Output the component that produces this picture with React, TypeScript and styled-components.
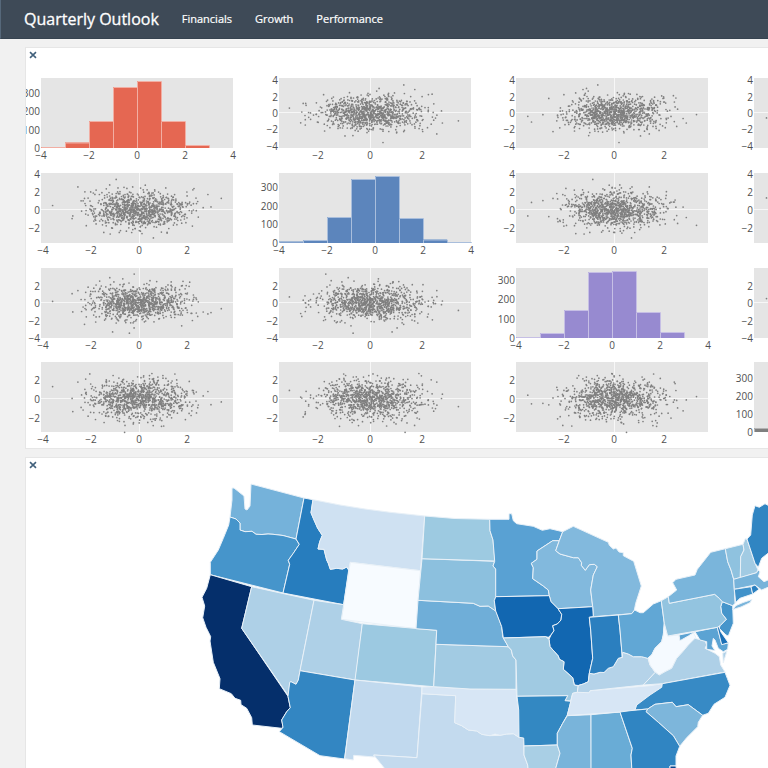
import React from "react";
import styled, { createGlobalStyle } from "styled-components";

const GlobalStyle = createGlobalStyle`
  *, *::before, *::after { box-sizing: border-box; }
  body {
    margin: 0;
    background: #f1f1f1;
    font-family: "Open Sans", sans-serif;
    overflow: hidden;
  }
`;

const Page = styled.div`
  display: flex;
  flex-direction: column;
  height: 100vh;
  overflow: hidden;
`;

const Header = styled.header`
  display: flex;
  flex: none;
  align-items: center;
  gap: 23px;
  height: 39px;
  padding-left: 23px;
  background: #3e4a57;
  border-left: 1px solid #56687a;
  border-bottom: 1px solid #364350;
`;

const Title = styled.h1`
  margin: 0;
  color: #fff;
  font-size: 16px;
  font-weight: 400;
  line-height: 24px;
  -webkit-text-stroke: 0.3px #fff;
`;

const Nav = styled.nav`
  display: flex;
  gap: 23px;
`;

const NavLink = styled.a`
  color: #fff;
  font-size: 11px;
  line-height: 24px;
  text-decoration: none;
  -webkit-text-stroke: 0.2px #fff;
`;

const Dashboard = styled.main`
  display: flex;
  flex: 1;
  flex-direction: column;
  gap: 8px;
  min-height: 0;
  padding: 8px 0 0 25px;
`;

const Panel = styled.section<{ $fill?: boolean }>`
  flex: ${(p) => (p.$fill ? "1 1 0" : "none")};
  min-height: 0;
  overflow: hidden;
  background: #fff;
  border: 1px solid #e6e6e6;
  border-right: 0;
  border-bottom-width: ${(p) => (p.$fill ? "0" : "1px")};
`;

const PanelBar = styled.div`
  display: flex;
  height: 16px;
  padding: 2px;
`;

const CloseButton = styled.button`
  display: flex;
  align-items: center;
  justify-content: center;
  width: 10px;
  height: 10px;
  padding: 0;
  background: none;
  border: 0;
  cursor: pointer;
`;

const Matrix = styled.div`
  display: grid;
  grid-template-columns: repeat(4, 1fr);
  grid-template-rows: repeat(4, 1fr);
  width: 950px;
  height: 379px;
  margin: 14px 0 -9px 15px;
`;

const Plot = styled.svg`
  display: block;
  width: 192px;
  height: 70px;
  overflow: visible;
`;

const Tick = styled.text`
  fill: #505050;
  font-family: "Open Sans", sans-serif;
  font-size: 10px;
`;

const MapDrawing = styled.svg`
  display: block;
  width: 900px;
  height: 480px;
`;

const State = styled.path`
  stroke: #e9f1f8;
  stroke-width: 1;
  stroke-linejoin: round;
`;

const W = 192;
const H = 70;

/* ---------- sample data ---------- */

function makeRandom(seed: number) {
  let s = seed;
  return () => {
    s = (s * 1664525 + 1013904223) % 4294967296;
    return s / 4294967296;
  };
}

function makeSamples(count: number): number[][] {
  const rand = makeRandom(2718);
  const normal = () => {
    let v = 9;
    while (Math.abs(v) > 2.9) {
      v = Math.sqrt(-2 * Math.log(rand() + 1e-9)) * Math.cos(2 * Math.PI * rand());
    }
    return v;
  };
  const rows = [
    [-3.6, 0.5, 0.2, 1.3],
    [3.43, 1.3, -0.65, -0.3],
    [0.6, -3.1, 0.7, 0.9],
    [-0.95, 3.4, -0.85, -0.8],
    [-0.2, -1.7, 3.3, 0.25],
    [-0.4, -0.65, -3.45, 0.4],
    [-1.1, 0.85, -3.3, -0.5],
    [-0.6, 1.35, 0.5, -3.5],
    [3, 0.35, -1.1, -0.6],
  ];
  while (rows.length < count) rows.push([normal(), normal(), normal(), normal()]);
  return rows;
}

const samples = makeSamples(1000);

type Axis = { zero: number; unit: number; ticks: number[] };

const xAxes: Axis[] = [
  { zero: 98, unit: 24, ticks: [-4, -2, 0, 2] },
  { zero: 91, unit: 26, ticks: [-2, 0, 2] },
  { zero: 98, unit: 25, ticks: [-2, 0, 2] },
  { zero: 100, unit: 25, ticks: [-2, 0, 2] },
];

const yAxes: Axis[] = [
  { zero: 35, unit: 8.2, ticks: [4, 2, 0, -2, -4] },
  { zero: 37, unit: 9, ticks: [4, 2, 0, -2] },
  { zero: 35, unit: 8.75, ticks: [2, 0, -2, -4] },
  { zero: 37, unit: 9.5, ticks: [2, 0, -2] },
];

const histograms = [
  { color: "#e56752", edge: "#f2aea3", step: 18.5, xTicks: [-4, -2, 0, 2, 4], bars: [1, 5.5, 27, 61, 67, 27, 3] },
  { color: "#5c85bc", edge: "#a9bedc", step: 18.7, xTicks: [-4, -2, 0, 2, 4], bars: [1.5, 3, 26, 64, 67, 25, 3.5, 1] },
  { color: "#978ad0", edge: "#c6bfe5", step: 19.4, xTicks: [-4, -2, 0, 2, 4], bars: [1, 5, 28, 66, 67, 26, 6] },
  { color: "#7f7f7f", edge: "#b4b4b4", step: 18, xTicks: [-2, 0, 2], bars: [4, 5, 27, 61, 66, 26, 3] },
];

const label = (v: number) => (v < 0 ? `−${-v}` : `${v}`);

function XTicks({ at }: { at: [number, number][] }) {
  return (
    <>
      {at.map(([v, x]) => (
        <Tick key={v} x={x} y={81} textAnchor="middle">
          {label(v)}
        </Tick>
      ))}
    </>
  );
}

function YTicks({ at }: { at: [number, number][] }) {
  return (
    <>
      {at.map(([v, y]) => (
        <Tick key={v} x={-1} y={y + 4} textAnchor="end">
          {label(v)}
        </Tick>
      ))}
    </>
  );
}

function Scatter({ row, col }: { row: number; col: number }) {
  const ax = xAxes[col];
  const ay = yAxes[row];
  return (
    <Plot viewBox={`0 0 ${W} ${H}`} role="img" aria-label={`Scatter ${row + 1}, ${col + 1}`}>
      <rect width={W} height={H} fill="#e5e5e5" />
      <path d={`M0 ${ay.zero - 0.5}H${W}M${ax.zero + 0.5} 0V${H}`} stroke="#f7f7f7" />
      <g fill="#7f7f7f">
        {samples.map((s, i) => {
          const x = ax.zero + s[col] * ax.unit;
          const y = ay.zero - s[row] * ay.unit;
          if (x < 1 || x > W - 1) return null;
          return <circle key={i} cx={x.toFixed(1)} cy={y.toFixed(1)} r="0.85" />;
        })}
      </g>
      <XTicks at={ax.ticks.map((v) => [v, ax.zero + v * ax.unit])} />
      <YTicks at={ay.ticks.map((v) => [v, ay.zero - v * ay.unit])} />
    </Plot>
  );
}

function Histogram({ index }: { index: number }) {
  const { color, edge, step, xTicks, bars } = histograms[index];
  return (
    <Plot viewBox={`0 0 ${W} ${H}`} role="img" aria-label={`Histogram ${index + 1}`}>
      <rect width={W} height={H} fill="#e5e5e5" />
      {bars.map((h, i) => (
        <React.Fragment key={i}>
          <rect x={i * 24} y={H - h} width={24} height={h} fill={color} />
          <path d={`M${i * 24 + 0.5} ${H}V${H - h + 0.5}H${i * 24 + 24.5}V${H}`} fill="none" stroke={edge} />
        </React.Fragment>
      ))}
      <XTicks at={xTicks.map((v) => [v, (v + 4) * 24])} />
      <YTicks at={[0, 100, 200, 300].map((v) => [v, H - (v / 100) * step])} />
    </Plot>
  );
}

/* ---------- map ---------- */

const states: [string, string, string][] = [
  ["WA", "#75b2da", "232,488 234,488 244,496 245,509 247,510 250,506 251,484 304,498 296,539 283,535.5 273,534.3 268,534 262,534.5 256,534.3 252,531.3 245,531.7 240,530 240,523 236,519 230,517 232,500"],
  ["OR", "#4695cb", "230,517 236,519 240,523 240,530 245,531.7 252,531.3 256,534.3 262,534.5 268,534 273,534.3 283,535.5 296,539 299.3,544.3 293.3,553.3 288.3,560.3 289.7,564.3 283,593 210.3,574.7 210.3,562.3 218.3,550 223.3,538.3 228.7,525"],
  ["ID", "#277dbe", "304,498 313,499.7 311,512.7 313.3,518.3 317.7,528.3 322.3,535.3 319.7,541.7 318,549 324,549.3 326.7,560 328.3,563.3 330.3,569.3 336.7,568.3 342.7,569 346.7,567 348.7,570 343.7,604.7 283,593 289.7,564.3 288.3,560.3 293.3,553.3 299.3,544.3 296,539"],
  ["MT", "#cfe1f2", "313,499.7 340,505 365,509 390,512.3 424.7,516 420.5,570.7 350.3,562.3 348.7,570 346.7,567 342.7,569 336.7,568.3 330.3,569.3 328.3,563.3 326.7,560 324,549.3 318,549 319.7,541.7 322.3,535.3 317.7,528.3 313.3,518.3 311,512.7"],
  ["WY", "#f7fbff", "350.3,562.3 420.5,570.7 416,628.7 341.3,619.3"],
  ["CA", "#052f6b", "210.3,574.7 251.7,586.7 241.7,628.3 288,696.3 290.3,707.7 286.7,711.7 281.7,720 283,726.7 281.7,728.3 252.3,725 251.7,717.7 246.7,708.3 241,704.7 240.7,700.3 235,698.3 231.3,693.7 219.3,688.7 220,678.7 213.3,662.3 210,641 210.7,636.7 206,627.3 202.7,617.7 204.7,606 202,597.3 206.7,588.3"],
  ["NV", "#aed0e7", "251.7,586.7 314,600.3 300,670.7 298.3,680 296,684.3 291,681.7 289.7,682.3 288.5,696 241.7,628.3"],
  ["UT", "#aed0e7", "314,600.3 343.7,604.7 341.3,619.3 362.3,623.7 355.5,680 300,670.7"],
  ["AZ", "#3386c2", "300,670.7 355,680 344.5,759 320,755.7 279.3,731.7 283,727.3 281.7,720 286.7,711.7 290.3,707.7 288,696.3 289.7,682.3 291,681.7 296,684.3 298.3,680"],
  ["CO", "#9cc9e1", "362.3,623.7 436.7,630.3 433.7,686.7 355,680"],
  ["NM", "#c1d9ee", "355,680 422,687 417,757.7 373.7,755 374.7,757 353.7,755.3 353.3,760 344.7,758.7"],
  ["TX", "#c3daee", "422,693.7 455.7,695.7 454.7,722.7 461.7,725.7 468.3,730 476.7,731 481.7,734.3 490,735.7 500,735.3 506.7,734 513.3,733.7 519,737.3 523.7,738 524,755 527.7,765 530,790 400,790 384,767.7 373.7,755 417,757.7"],
  ["OK", "#d7e6f5", "422,687 433.7,686.7 470,689 516,689.3 516.7,698.3 518.7,710 519,737.3 513.3,733.7 506.7,734 500,735.3 495,734 490,735.7 481.7,734.3 476.7,731 468.3,730 461.7,725.7 454.7,722.7 455.7,695.7 422,693.7"],
  ["KS", "#a2cbe3", "436,644.3 508.3,646.7 511.3,650 512.7,656 516,660 516,689.3 470,689 433.7,686.7"],
  ["NE", "#6faed8", "418,600.3 473.3,603.3 480,606.3 488.3,606 496,611 501.7,626.7 502.7,636.7 508.3,646.7 436,644.3 436.7,630.3 416,628.7"],
  ["SD", "#8cc0de", "422,558.7 494.7,561.3 493,566 495.7,569 496.3,596 494.3,600.7 495.7,611 488.3,606 480,606.3 473.3,603.3 418,600.3"],
  ["ND", "#9dcae1", "424.7,516 455,518.5 489.7,519.3 490,530.7 493,540 495,561 422,558.7"],
  ["MN", "#59a1d3", "489.7,519.3 509,519.3 509,513.7 511.7,513.7 513.3,520.7 516.7,523.7 533.3,526.3 542.3,530.3 550,528.7 562.7,531.7 559.3,540.7 552.7,540.7 537,551 537,559.3 531.3,563.3 533.3,567.7 532.7,578.7 543.3,586 548.3,590 549.3,595.7 495.7,596.7 495.7,569 493,566 494.7,561.3 493,540 490,530.7"],
  ["WI", "#82b9dd", "552.7,540.7 559.3,540.7 555.7,550.7 560,554 573.3,557.7 578.3,557.7 581.7,562.7 581.3,565.3 585.3,570.3 589.3,564.7 594.3,564.3 597.3,566.7 593.3,575 590.7,590 592.7,606.7 558,608.7 551,601.7 549.3,595.7 548.3,590 543.3,586 532.7,578.7 533.3,567.7 531.3,563.3 537,559.3 537,551"],
  ["MI", "#82b9dd", "562.7,531.7 573.3,526.3 608.3,542.3 609.3,545.3 613.3,549 616,548 619,552 623.3,552.7 623.3,555.7 633.7,561.3 641.3,586 635.7,603.3 634.3,610.3 631.7,613.7 593.3,616.7 592.7,606.7 590.7,590 593.3,575 597.3,566.7 594.3,564.3 589.3,564.7 585.3,570.3 581.3,565.3 581.7,562.7 578.3,557.7 573.3,557.7 560,554 555.7,550.7 559.3,540.7"],
  ["IA", "#1267b1", "495.7,596.7 549.3,595.7 551,601.7 558,608.7 561.7,614.3 561,620 557.3,624 552.7,625.7 554,630.7 551,635 548.3,637.3 545.7,636.7 503.3,638 501.7,626.7 495.7,611 494.3,600.7"],
  ["IL", "#1267b1", "558,608.7 592.7,606.7 593.3,616.7 589.3,617.3 590.7,630 592.7,658.3 589.3,673.3 588.3,681.7 583.3,684 578.3,685.5 574.3,685 572.7,677.7 563.3,669.3 564,661.7 559.3,659.3 558.3,656 550,646.7 549,639.3 551,635 554,630.7 552.7,625.7 557.3,624 561,620 561.7,614.3"],
  ["MO", "#a0cae2", "503.3,638 545.7,636.7 549,639.3 550,646.7 558.3,656 559.3,659.3 564,661.7 563.3,669.3 572.7,677.7 574.3,685 578.3,686 577.3,692.3 572.7,693.3 570.7,701 565,700.7 567.7,695.7 517,696.3 516,660 512.7,656 511.3,650 508.3,646.7"],
  ["AR", "#3388c2", "517,696.3 567.7,695.7 565,700.7 571,701.3 567.3,715 562.7,723.3 557.3,733.3 557.3,745 524,746 523.7,738 519,737.3 518.7,710"],
  ["LA", "#a9cfe5", "524,746 557.3,745 560,753.3 556,767.3 555,790 530,790 527.7,765 524,755"],
  ["MS", "#79b4da", "567.3,715.7 591,714.7 591.3,767.3 591,790 555,790 556,767.3 560,753.3 557.3,745 557.3,733.3 562.7,723.3"],
  ["AL", "#69acd6", "591,714.7 620,712 632.3,748.3 631,755 631.7,767 631,790 591,790"],
  ["TN", "#d7e6f5", "577.3,692.3 589.3,692.7 590,690.7 650,685.7 662.3,683.7 661.7,687.3 650,695 636.7,705 635,710 630,710.7 620,712 567.3,715.5 572.7,693.3"],
  ["KY", "#b5d3e9", "578.3,685.5 583.3,684 588.3,681.7 589.3,673.3 594,674 600,672.3 604,672.5 608.3,668.3 613.3,666.7 618.3,658.3 622.3,657.3 622.7,652.3 628.3,654 633.3,656.7 641.7,656.7 648,658.3 650,665 655.3,672.3 643.3,685 590,690.7 589.3,692.7 577.3,692.3"],
  ["IN", "#2b7fbf", "589.3,617.3 618.3,615 620,630 622.3,657.3 618.3,658.3 613.3,666.7 608.3,668.3 604,672.5 600,672.3 594,674 589.3,673.3 592.7,658.3 590.7,630"],
  ["OH", "#61a7d5", "618.3,615 631.7,613.7 634.7,610 640,612.7 643.3,612.7 653.3,604 661.3,600.7 664.3,623.3 663.3,635 661.7,641.7 655,648.3 651.7,655 647.7,658.3 641.7,656.7 633.3,656.7 628.3,654 622.7,652.3 622.3,657.3 620,630"],
  ["WV", "#f5faff", "664.3,623.3 667.7,636 679,635 680,640.7 687.3,635 693.3,632.7 696,637.5 688.3,645 682.7,651.7 676.7,658.3 671.7,668.3 665,671.7 659.3,675 655.3,672.3 650,665 648,658 651.7,655 655,648.3 661.7,641.7 663.3,635"],
  ["VA", "#aed0e7", "643.3,685 655.3,672.3 659.3,675 665,671.7 671.7,668.3 676.7,658.3 682.7,651.7 688.3,645 695,638.3 705,641 706.7,645 705,648.3 715,653.3 719.3,656.7 720.7,665 725,672 662.3,683.7"],
  ["VAE", "#aed0e7", "722.7,653.3 727,651 723.3,662.7"],
  ["MD", "#5ba3d3", "679,635 717.3,627.3 721.7,644 728.3,643.3 727.7,649.3 723.3,651.7 718.3,648.3 715,640 713.3,638.3 712,646 715,650.5 706.7,649.3 706.7,641.7 700,640 695,631.7 688.3,636 680,640.7"],
  ["DE", "#1b70b7", "717.3,627.3 719.3,626.7 720.7,631.7 728.3,642.7 721.7,644.7"],
  ["NJ", "#4695cb", "722.3,601.7 732.7,605.7 733.3,623.3 728.3,636 726,635 719.3,628.3 720,625.7 726.3,619.3 721.7,613.3 720.7,606.7"],
  ["PA", "#93c4e0", "661.3,600.7 668.3,596.7 669.3,603.3 714.7,594.3 719.3,598.3 722.3,601.7 720.7,606.7 721.7,613.3 726.3,619.3 720,625.7 717.3,627.3 667.7,636 664.3,623.3"],
  ["NY", "#7ab5db", "668.3,596.7 676.7,590 672.7,582.7 676,579.3 695,575 697.3,569.3 710.7,552.3 725.3,548.7 727.7,561.7 731,570 733.7,579.3 734.3,589.3 735,603.3 732.7,605.7 722.3,601.7 719.3,598.3 714.7,594.3 669.3,603.3"],
  ["LI", "#7ab5db", "732.7,609.5 736,605.5 743,602.5 752,599.5 750,602.7 741,607"],
  ["VT", "#8fc2df", "725.3,548.7 743,544.3 744,550 740.7,556.7 740.3,577.7 733.7,579.3 731,570 727.7,561.7"],
  ["NH", "#a2cbe3", "743,544.3 745.3,538.7 747,539.3 755,563.3 758,570 756.7,572.7 740.3,577.7 740.7,556.7 744,550"],
  ["ME", "#3085c2", "747,539 750.7,535 752.3,515 755,505.7 759.3,507.3 765,503.7 768,505.3 785,512 785,545 768,553.3 761.7,558.3 758.3,567.3 755,563.3"],
  ["MA", "#77b3da", "733.7,579.3 756.7,572.7 758,570 760,571.7 758.3,576.7 764,581.7 768,580 775,582 768,587.3 761.7,590 755,585 734.3,589.3"],
  ["CT", "#4192ca", "734.3,589.3 751,586.7 752.7,594 740,598.3 735.7,602.5"],
  ["RI", "#2b80c0", "751,586.7 755,585 759,589.3 752.7,594"],
  ["NC", "#378ac5", "662.3,683.7 725,672.3 727.3,678.3 730,685.3 725,697.3 714,704.3 708.3,713.3 702.7,715.3 688.3,704.7 676,706.7 672.3,702.3 655,704.3 647.7,709 635,710 636.7,705 650,695 661.7,687.3"],
  ["SC", "#7db6db", "647.7,709 655,704.3 672.3,702.3 676,706.7 688.3,704.7 702.7,715.3 698.3,722.3 697.7,726.7 686.7,737.7 679.7,746.3 673.3,735.7 658.3,722.3 646,711.7"],
  ["GA", "#3085c2", "620,712 630,710.7 647.7,709 646,711.7 658.3,722.3 673.3,735.7 679.7,746.3 676,756 676,766 670,766 670,790 632,790 631.7,767 631,755 632.3,748.3"],
  ["FL", "#08458f", "670,766 676,766 678,790 670,790"],
];

function ClosablePanel({ name, fill, children }: { name: string; fill?: boolean; children: React.ReactNode }) {
  return (
    <Panel $fill={fill} aria-label={name}>
      <PanelBar>
        <CloseButton type="button" aria-label={`Close ${name}`}>
          <svg width="8" height="8" viewBox="0 0 8 8">
            <path d="M1 1.2L7 6.8M7 1.2L1 6.8" stroke="#42617c" strokeWidth="1.6" />
          </svg>
        </CloseButton>
      </PanelBar>
      {children}
    </Panel>
  );
}

export default function App() {
  const cells = [0, 1, 2, 3].flatMap((row) => [0, 1, 2, 3].map((col) => ({ row, col })));
  return (
    <Page>
      <GlobalStyle />
      <Header>
        <Title>Quarterly Outlook</Title>
        <Nav>
          <NavLink href="#financials">Financials</NavLink>
          <NavLink href="#growth">Growth</NavLink>
          <NavLink href="#performance">Performance</NavLink>
        </Nav>
      </Header>
      <Dashboard>
        <ClosablePanel name="Scatter matrix">
          <Matrix>
            {cells.map(({ row, col }) =>
              row === col ? (
                <Histogram key={`${row}${col}`} index={row} />
              ) : (
                <Scatter key={`${row}${col}`} row={row} col={col} />
              )
            )}
          </Matrix>
        </ClosablePanel>
        <ClosablePanel name="State map" fill>
          <MapDrawing viewBox="26 474 900 480" role="img" aria-label="United States by state">
            {states.map(([id, color, points]) => (
              <State key={id} fill={color} d={`M${points.split(" ").join("L")}Z`} />
            ))}
          </MapDrawing>
        </ClosablePanel>
      </Dashboard>
    </Page>
  );
}
